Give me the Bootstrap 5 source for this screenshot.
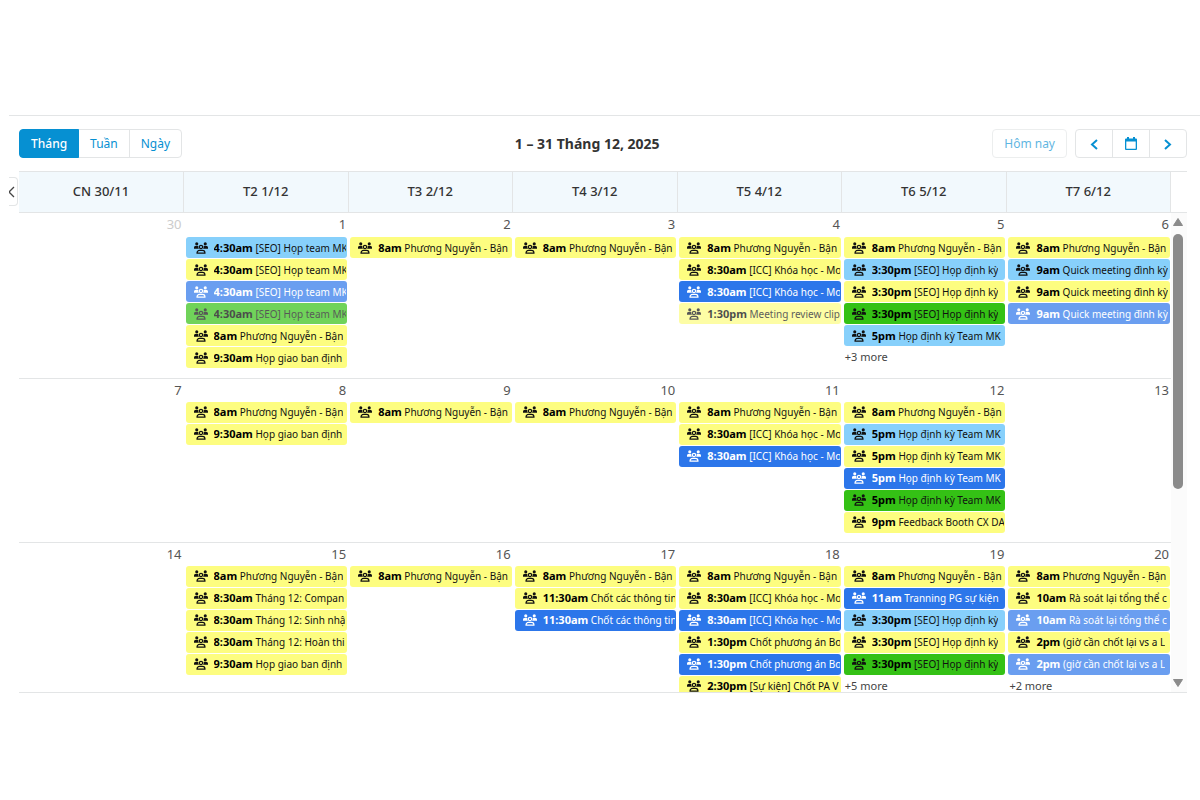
<!DOCTYPE html>
<html lang="vi">
<head>
<meta charset="utf-8">
<meta name="viewport" content="width=device-width, initial-scale=1">
<title>Lịch tháng 12, 2025</title>
<link href="https://cdn.jsdelivr.net/npm/bootstrap@5.3.0/dist/css/bootstrap.min.css" rel="stylesheet">
<style>
  :root { --line: #e3e5e6; --brand: #0690d2; }
  body { font-family: "Noto Sans", "Open Sans", sans-serif; font-size: 13px; color: #333; background: #fff; }
  .planner { margin: 115px 0 0 9px; border-top: 1px solid var(--line); padding: 13px 13px 0 10px; }
  .tool-row .btn { --bs-btn-font-size: 12px; --bs-btn-line-height: 19px; --bs-btn-padding-y: 4px; --bs-btn-padding-x: 11px;
    --bs-btn-color: var(--brand); --bs-btn-border-color: var(--line); --bs-btn-border-radius: 4px;
    --bs-btn-active-bg: var(--brand); --bs-btn-active-border-color: var(--brand); --bs-btn-active-color: #fff;
    --bs-btn-hover-color: var(--brand); --bs-btn-hover-border-color: var(--line);
    --bs-btn-disabled-color: var(--brand); --bs-btn-disabled-border-color: var(--line); }
  .tool-row .btn.active { font-weight: 500; }
  .tool-row .nav-btn { width: 38px; padding-left: 0; padding-right: 0; }
  .nav-btn svg { display: block; margin: 0 auto; }
  .range-title { font-size: 14px; font-weight: 700; margin: 0; line-height: 20px; }
  .calendar { margin-top: 13px; }
  .head-row { border-top: 1px solid var(--line); border-bottom: 1px solid var(--line); }
  .gutter { width: 16px; flex: none; }
  .cal-table { table-layout: fixed; width: 100%; border-collapse: collapse; }
  .head-row th { height: 40px; background: #f2f9fd; border-right: 1px solid var(--line); font-weight: 500; text-align: center; vertical-align: middle; }
  .scroll-area { height: 480px; border-bottom: 1px solid var(--line); overflow: hidden; }
  .weeks td { height: 164px; padding: 0 1px 0 2px; vertical-align: top; border-top: 1px solid var(--line); }
  .weeks tr:first-child td { height: 165px; border-top: 0; }
  .day-no { display: block; height: 23px; line-height: 22px; padding-right: 1px; text-align: right; color: #555; text-decoration: none; }
  .weeks tr:first-child .day-no { height: 24px; }
  .day-no.other { color: #ccc; }
  .ev { display: flex; align-items: center; height: 21px; margin-bottom: 1px; padding: 0 1px 0 8px; border-radius: 3px; overflow: hidden;
    white-space: nowrap; font-size: 10px; line-height: 21px; color: #111; background: #fdfd80; text-decoration: none; }
  .ev svg { width: 14px; height: 12px; flex: none; margin-right: 6px; }
  .ev span { overflow: hidden; }
  .ev b { color: #000; font-size: 11px; font-weight: 700; }
  .sky { background: #87d0fb; }
  .blue { background: #2c76ea; color: #fff; }
  .green { background: #34c115; }
  .blue b { color: #fff; }
  .past { opacity: .7; }
  .more { display: block; padding-left: 1px; font-size: 11px; line-height: 19px; color: #444; text-decoration: none; }
  .bar { width: 16px; flex: none; background: #fbfbfb; padding: 4px 2px 4px 0; }
  .thumb { width: 10px; height: 255px; border-radius: 5px; background: #8b8b8b; margin-top: 7px; }
  .collapse-tab { position: absolute; left: 9px; top: 177px; width: 9px; height: 29px; padding: 0; background: #fff; border: 1px solid var(--line); border-left: 0; border-radius: 0 4px 4px 0; }
  .collapse-tab svg { display: block; }
</style>
</head>
<body>
<svg class="d-none" aria-hidden="true">
  <symbol id="team" viewBox="0 0 28 24">
    <g fill="currentColor">
      <circle cx="5.5" cy="3.6" r="3.1"/><circle cx="22.5" cy="3.6" r="3.1"/>
      <path d="M0 13.400v-2C0 9 1.800 7.600 4 7.600h2.800c.8 0 1.400.1 2 .4-.6 1.800-.2 3.600 1 5.400z"/>
      <path d="M28 13.400v-2C28 9 26.200 7.600 24 7.600h-2.800c-.8 0-1.400.1-2 .4.6 1.800.2 3.600-1 5.400z"/>
    </g>
    <g fill="none" stroke="currentColor" stroke-width="2.400">
      <circle cx="14" cy="10" r="3.300"/>
      <path d="M6 22.400c0-3.400 2.200-5.600 5-5.600h6c2.800 0 5 2.200 5 5.600z" stroke-linejoin="round"/>
    </g>
  </symbol>
</svg>

<main class="planner">
  <div class="tool-row d-flex justify-content-between align-items-center">
    <div class="btn-group" role="group" aria-label="Chế độ xem">
      <button type="button" class="btn active">Tháng</button>
      <button type="button" class="btn">Tuần</button>
      <button type="button" class="btn">Ngày</button>
    </div>
    <h1 class="range-title">1 – 31 Tháng 12, 2025</h1>
    <div class="d-flex gap-2">
      <button type="button" class="btn" disabled>Hôm nay</button>
      <div class="btn-group" role="group" aria-label="Điều hướng">
        <button type="button" class="btn nav-btn" aria-label="Trước"><svg width="12" height="12" viewBox="0 0 12 12" fill="none" stroke="currentColor" stroke-width="2"><path d="M9 2 4 6.500 9 11"/></svg></button>
        <button type="button" class="btn nav-btn" aria-label="Chọn ngày"><svg width="12" height="14" viewBox="0 0 12 14" fill="currentColor"><path fill-rule="evenodd" d="M2 0h2v1.500h4V0h2v1.500h1a1 1 0 0 1 1 1V12a1 1 0 0 1-1 1H1a1 1 0 0 1-1-1V2.500a1 1 0 0 1 1-1h1zM1.300 4.500v7.200h9.400V4.500z"/></svg></button>
        <button type="button" class="btn nav-btn" aria-label="Sau"><svg width="12" height="12" viewBox="0 0 12 12" fill="none" stroke="currentColor" stroke-width="2"><path d="M3 2l5 4.500L3 11"/></svg></button>
      </div>
    </div>
  </div>

  <div class="calendar">
    <div class="head-row d-flex">
      <table class="cal-table">
        <thead><tr><th scope="col">CN 30/11</th><th scope="col">T2 1/12</th><th scope="col">T3 2/12</th><th scope="col">T4 3/12</th><th scope="col">T5 4/12</th><th scope="col">T6 5/12</th><th scope="col">T7 6/12</th></tr></thead>
      </table>
      <div class="gutter"></div>
    </div>
    <div class="scroll-area d-flex">
      <div class="flex-grow-1">
      <table class="cal-table weeks">
        <tbody>
        <tr>
          <td><a href="#" class="day-no other">30</a></td>
          <td><a href="#" class="day-no">1</a>
            <a href="#" class="ev sky"><svg><use href="#team"/></svg><span><b>4:30am</b> [SEO] Họp team MK</span></a>
            <a href="#" class="ev"><svg><use href="#team"/></svg><span><b>4:30am</b> [SEO] Họp team MK</span></a>
            <a href="#" class="ev blue past"><svg><use href="#team"/></svg><span><b>4:30am</b> [SEO] Họp team MK</span></a>
            <a href="#" class="ev green past"><svg><use href="#team"/></svg><span><b>4:30am</b> [SEO] Họp team MK</span></a>
            <a href="#" class="ev"><svg><use href="#team"/></svg><span><b>8am</b> Phương Nguyễn - Bận</span></a>
            <a href="#" class="ev"><svg><use href="#team"/></svg><span><b>9:30am</b> Họp giao ban định</span></a></td>
          <td><a href="#" class="day-no">2</a>
            <a href="#" class="ev"><svg><use href="#team"/></svg><span><b>8am</b> Phương Nguyễn - Bận</span></a></td>
          <td><a href="#" class="day-no">3</a>
            <a href="#" class="ev"><svg><use href="#team"/></svg><span><b>8am</b> Phương Nguyễn - Bận</span></a></td>
          <td><a href="#" class="day-no">4</a>
            <a href="#" class="ev"><svg><use href="#team"/></svg><span><b>8am</b> Phương Nguyễn - Bận</span></a>
            <a href="#" class="ev"><svg><use href="#team"/></svg><span><b>8:30am</b> [ICC] Khóa học - Mo</span></a>
            <a href="#" class="ev blue"><svg><use href="#team"/></svg><span><b>8:30am</b> [ICC] Khóa học - Mo</span></a>
            <a href="#" class="ev past"><svg><use href="#team"/></svg><span><b>1:30pm</b> Meeting review clip</span></a></td>
          <td><a href="#" class="day-no">5</a>
            <a href="#" class="ev"><svg><use href="#team"/></svg><span><b>8am</b> Phương Nguyễn - Bận</span></a>
            <a href="#" class="ev sky"><svg><use href="#team"/></svg><span><b>3:30pm</b> [SEO] Họp định kỳ</span></a>
            <a href="#" class="ev"><svg><use href="#team"/></svg><span><b>3:30pm</b> [SEO] Họp định kỳ</span></a>
            <a href="#" class="ev green"><svg><use href="#team"/></svg><span><b>3:30pm</b> [SEO] Họp định kỳ</span></a>
            <a href="#" class="ev sky"><svg><use href="#team"/></svg><span><b>5pm</b> Họp định kỳ Team MK</span></a>
            <a href="#" class="more">+3 more</a></td>
          <td><a href="#" class="day-no">6</a>
            <a href="#" class="ev"><svg><use href="#team"/></svg><span><b>8am</b> Phương Nguyễn - Bận</span></a>
            <a href="#" class="ev sky"><svg><use href="#team"/></svg><span><b>9am</b> Quick meeting đình kỳ</span></a>
            <a href="#" class="ev"><svg><use href="#team"/></svg><span><b>9am</b> Quick meeting đình kỳ</span></a>
            <a href="#" class="ev blue past"><svg><use href="#team"/></svg><span><b>9am</b> Quick meeting đình kỳ</span></a></td>
        </tr>
        <tr>
          <td><a href="#" class="day-no">7</a></td>
          <td><a href="#" class="day-no">8</a>
            <a href="#" class="ev"><svg><use href="#team"/></svg><span><b>8am</b> Phương Nguyễn - Bận</span></a>
            <a href="#" class="ev"><svg><use href="#team"/></svg><span><b>9:30am</b> Họp giao ban định</span></a></td>
          <td><a href="#" class="day-no">9</a>
            <a href="#" class="ev"><svg><use href="#team"/></svg><span><b>8am</b> Phương Nguyễn - Bận</span></a></td>
          <td><a href="#" class="day-no">10</a>
            <a href="#" class="ev"><svg><use href="#team"/></svg><span><b>8am</b> Phương Nguyễn - Bận</span></a></td>
          <td><a href="#" class="day-no">11</a>
            <a href="#" class="ev"><svg><use href="#team"/></svg><span><b>8am</b> Phương Nguyễn - Bận</span></a>
            <a href="#" class="ev"><svg><use href="#team"/></svg><span><b>8:30am</b> [ICC] Khóa học - Mo</span></a>
            <a href="#" class="ev blue"><svg><use href="#team"/></svg><span><b>8:30am</b> [ICC] Khóa học - Mo</span></a></td>
          <td><a href="#" class="day-no">12</a>
            <a href="#" class="ev"><svg><use href="#team"/></svg><span><b>8am</b> Phương Nguyễn - Bận</span></a>
            <a href="#" class="ev sky"><svg><use href="#team"/></svg><span><b>5pm</b> Họp định kỳ Team MK</span></a>
            <a href="#" class="ev"><svg><use href="#team"/></svg><span><b>5pm</b> Họp định kỳ Team MK</span></a>
            <a href="#" class="ev blue"><svg><use href="#team"/></svg><span><b>5pm</b> Họp định kỳ Team MK</span></a>
            <a href="#" class="ev green"><svg><use href="#team"/></svg><span><b>5pm</b> Họp định kỳ Team MK</span></a>
            <a href="#" class="ev"><svg><use href="#team"/></svg><span><b>9pm</b> Feedback Booth CX DA</span></a></td>
          <td><a href="#" class="day-no">13</a></td>
        </tr>
        <tr>
          <td><a href="#" class="day-no">14</a></td>
          <td><a href="#" class="day-no">15</a>
            <a href="#" class="ev"><svg><use href="#team"/></svg><span><b>8am</b> Phương Nguyễn - Bận</span></a>
            <a href="#" class="ev"><svg><use href="#team"/></svg><span><b>8:30am</b> Tháng 12: Compan</span></a>
            <a href="#" class="ev"><svg><use href="#team"/></svg><span><b>8:30am</b> Tháng 12: Sinh nhậ</span></a>
            <a href="#" class="ev"><svg><use href="#team"/></svg><span><b>8:30am</b> Tháng 12: Hoàn thi</span></a>
            <a href="#" class="ev"><svg><use href="#team"/></svg><span><b>9:30am</b> Họp giao ban định</span></a></td>
          <td><a href="#" class="day-no">16</a>
            <a href="#" class="ev"><svg><use href="#team"/></svg><span><b>8am</b> Phương Nguyễn - Bận</span></a></td>
          <td><a href="#" class="day-no">17</a>
            <a href="#" class="ev"><svg><use href="#team"/></svg><span><b>8am</b> Phương Nguyễn - Bận</span></a>
            <a href="#" class="ev"><svg><use href="#team"/></svg><span><b>11:30am</b> Chốt các thông tin</span></a>
            <a href="#" class="ev blue"><svg><use href="#team"/></svg><span><b>11:30am</b> Chốt các thông tin</span></a></td>
          <td><a href="#" class="day-no">18</a>
            <a href="#" class="ev"><svg><use href="#team"/></svg><span><b>8am</b> Phương Nguyễn - Bận</span></a>
            <a href="#" class="ev"><svg><use href="#team"/></svg><span><b>8:30am</b> [ICC] Khóa học - Mo</span></a>
            <a href="#" class="ev blue"><svg><use href="#team"/></svg><span><b>8:30am</b> [ICC] Khóa học - Mo</span></a>
            <a href="#" class="ev"><svg><use href="#team"/></svg><span><b>1:30pm</b> Chốt phương án Bo</span></a>
            <a href="#" class="ev blue"><svg><use href="#team"/></svg><span><b>1:30pm</b> Chốt phương án Bo</span></a>
            <a href="#" class="ev"><svg><use href="#team"/></svg><span><b>2:30pm</b> [Sự kiện] Chốt PA V</span></a></td>
          <td><a href="#" class="day-no">19</a>
            <a href="#" class="ev"><svg><use href="#team"/></svg><span><b>8am</b> Phương Nguyễn - Bận</span></a>
            <a href="#" class="ev blue"><svg><use href="#team"/></svg><span><b>11am</b> Tranning PG sự kiện</span></a>
            <a href="#" class="ev sky"><svg><use href="#team"/></svg><span><b>3:30pm</b> [SEO] Họp định kỳ</span></a>
            <a href="#" class="ev"><svg><use href="#team"/></svg><span><b>3:30pm</b> [SEO] Họp định kỳ</span></a>
            <a href="#" class="ev green"><svg><use href="#team"/></svg><span><b>3:30pm</b> [SEO] Họp định kỳ</span></a>
            <a href="#" class="more">+5 more</a></td>
          <td><a href="#" class="day-no">20</a>
            <a href="#" class="ev"><svg><use href="#team"/></svg><span><b>8am</b> Phương Nguyễn - Bận</span></a>
            <a href="#" class="ev"><svg><use href="#team"/></svg><span><b>10am</b> Rà soát lại tổng thể c</span></a>
            <a href="#" class="ev blue past"><svg><use href="#team"/></svg><span><b>10am</b> Rà soát lại tổng thể c</span></a>
            <a href="#" class="ev"><svg><use href="#team"/></svg><span><b>2pm</b> (giờ cần chốt lại vs a L</span></a>
            <a href="#" class="ev blue past"><svg><use href="#team"/></svg><span><b>2pm</b> (giờ cần chốt lại vs a L</span></a>
            <a href="#" class="more">+2 more</a></td>
        </tr>
        </tbody>
      </table>
      </div>
      <div class="bar d-flex flex-column align-items-center" aria-hidden="true">
        <svg width="12" height="10" viewBox="0 0 12 10"><path d="M6 1.500 10.500 8.500h-9z" fill="#8b8b8b" stroke="#8b8b8b" stroke-linejoin="round"/></svg>
        <div class="thumb"></div>
        <svg class="mt-auto" width="12" height="10" viewBox="0 0 12 10"><path d="M6 8.500 10.500 1.500h-9z" fill="#8b8b8b" stroke="#8b8b8b" stroke-linejoin="round"/></svg>
      </div>
    </div>
  </div>
  <button type="button" class="collapse-tab" aria-label="Mở thanh bên"><svg width="7" height="27" viewBox="0 0 7 27" fill="none" stroke="#444" stroke-width="1.300"><path d="M5 9 0 14l5 5"/></svg></button>
</main>
<script src="https://cdn.jsdelivr.net/npm/bootstrap@5.3.0/dist/js/bootstrap.bundle.min.js"></script>
</body>
</html>
